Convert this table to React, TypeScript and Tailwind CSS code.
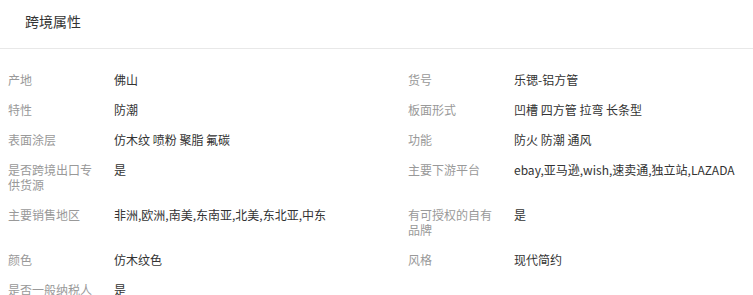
const rows: [string, string, string?, string?][] = [
  ['产地', '佛山', '货号', '乐锶-铝方管'],
  ['特性', '防潮', '板面形式', '凹槽 四方管 拉弯 长条型'],
  ['表面涂层', '仿木纹 喷粉 聚脂 氟碳', '功能', '防火 防潮 通风'],
  ['是否跨境出口专供货源', '是', '主要下游平台', 'ebay,亚马逊,wish,速卖通,独立站,LAZADA'],
  ['主要销售地区', '非洲,欧洲,南美,东南亚,北美,东北亚,中东', '有可授权的自有品牌', '是'],
  ['颜色', '仿木纹色', '风格', '现代简约'],
  ['是否一般纳税人', '是'],
];

function Cell({ label, value }: { label?: string; value?: string }) {
  if (!label) return <div />;
  return (
    <div className="flex pl-2 pb-[15px] text-[12px] leading-[15px]">
      <div className="w-[92px] mr-[14px] shrink-0 text-[#999999]">{label}</div>
      <div className="flex-1 text-[#333333]">{value}</div>
    </div>
  );
}

export default function App() {
  return (
    <div
      className="w-[753px] h-[295px] overflow-hidden bg-white"
      style={{ fontFamily: '"Noto Sans CJK SC", "Noto Sans", sans-serif' }}
    >
      {/* Title */}
      <div className="h-[49px] border-b border-[#e8e8e8] pl-[25px] pt-[8px]">
        <span className="text-[14px] leading-[20px] text-[#333333]">跨境属性</span>
      </div>

      {/* Attributes */}
      <div className="grid grid-cols-[400px_1fr] pt-[23px]">
        {rows.map((r) => (
          <div key={r[0]} className="contents">
            <Cell label={r[0]} value={r[1]} />
            <Cell label={r[2]} value={r[3]} />
          </div>
        ))}
      </div>
    </div>
  );
}
